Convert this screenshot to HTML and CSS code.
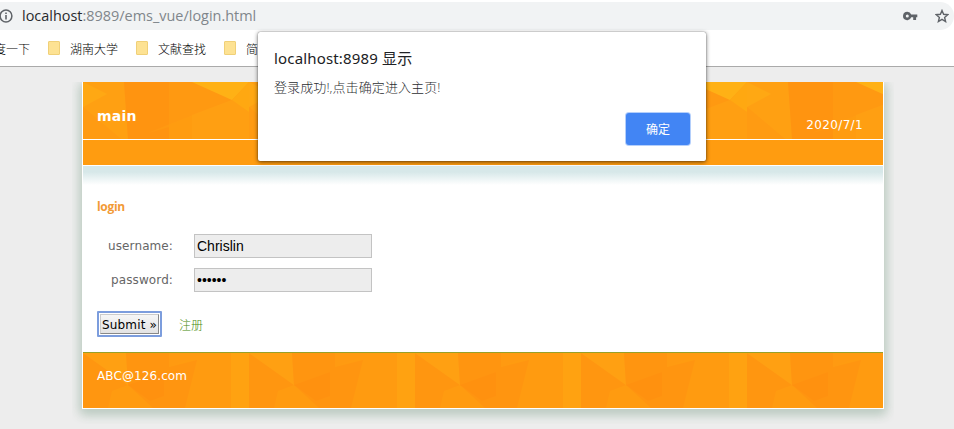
FILE: index.html
```html
<!DOCTYPE html>
<html lang="zh-CN">
<head>
<meta charset="utf-8">
<title>login</title>
<link rel="stylesheet" href="styles.css">
</head>
<body>
<div class="browser">
  <div class="address">
    <svg class="info" width="14" height="14" viewBox="0 0 14 14"><circle cx="7" cy="7" r="5.9" fill="none" stroke="#5f6368" stroke-width="1.5"/><path d="M6.2 6h1.6v4.4H6.2zM6.2 3.4h1.6v1.6H6.2z" fill="#5f6368"/></svg>
    <div class="url"><span class="host">localhost</span>:8989/ems_vue/login.html</div>
    <svg class="key" width="15" height="10" viewBox="0 0 15 10"><path fill-rule="evenodd" d="M4.3.7a4.2 4.2 0 0 1 3.9 2.8H14.3v2.8h-1.2v2.6h-2.9V6.3h-2A4.2 4.2 0 1 1 4.3.7zm0 2.7a1.5 1.5 0 1 0 0 3 1.5 1.5 0 0 0 0-3z" fill="#5f6368"/></svg>
    <svg class="star" width="14" height="14" viewBox="0 0 14 14"><path d="M7 1.5l1.6 3.8 4.2.4-3.2 2.7 1 4.1L7 10.3l-3.6 2.2 1-4.1L1.2 5.7l4.2-.4z" fill="none" stroke="#5f6368" stroke-width="1.4"/></svg>
  </div>
  <div class="bookmarks">
    <span class="mark first">度一下</span>
    <i class="folder"></i><span class="mark">湖南大学</span>
    <i class="folder"></i><span class="mark">文献查找</span>
    <i class="folder"></i><span class="mark">简</span>
  </div>
</div>
<div class="page">
  <div class="wrap">
    <div class="header">
      <svg class="art" width="800" height="57">
        <defs>
          <pattern id="top" width="166" height="57" patternUnits="userSpaceOnUse">
            <path d="M0 0h166v57H0z" fill="#ff9c10"/>
            <path d="M0 0h41l4 57h-7L0 25z" fill="#ffa012"/>
            <path d="M0 0v25l24-13z" fill="#ffa813"/>
            <path d="M0 25l38 32H0z" fill="#ff9b12"/>
            <path d="M41 0h45v57H45z" fill="#ff9410"/>
            <path d="M86 0h25l38 18-62 24-22 9 21-6z" fill="#ff9911"/>
            <path d="M149 18l17 12v27H109V33z" fill="#ff9f12"/>
            <path d="M109 0h57l-17 18z" fill="#ffb115"/>
            <path d="M166 0v30l-17-12z" fill="#ffa811"/>
          </pattern>
        </defs>
        <path d="M0 0h800v57H0z" fill="url(#top)"/>
      </svg>
      <div class="brand">main</div>
      <div class="date">2020/7/1</div>
    </div>
    <div class="nav"></div>
    <div class="content">
      <h1>login</h1>
      <div class="row"><label>username:</label><div class="input">Chrislin</div></div>
      <div class="row"><label>password:</label><div class="input dots">••••••</div></div>
      <div class="actions"><div class="submit"><span>Submit »</span></div><a>注册</a></div>
    </div>
    <div class="footer">
      <svg class="art" width="800" height="55">
        <defs>
          <pattern id="bottom" width="166" height="55" patternUnits="userSpaceOnUse">
            <path d="M0 0h166v55H0z" fill="#ff9b10"/>
            <path d="M0 0l45 32-16 6-4 17H0z" fill="#ff9610"/>
            <path d="M0 0h43l2 32z" fill="#ffa012"/>
            <path d="M43 0h43v14l28-7-12 48H70L45 32z" fill="#ff9510"/>
            <path d="M45 32l36-13v24l-14 5z" fill="#ff910f"/>
            <path d="M86 0h36l-36 14z" fill="#ff9a11"/>
            <path d="M148 0h18v55h-18z" fill="#ffa211"/>
          </pattern>
        </defs>
        <path d="M0 0h800v55H0z" fill="url(#bottom)"/>
      </svg>
      <div class="mail">ABC@126.com</div>
    </div>
  </div>
</div>
<div class="dialog">
  <div class="title">localhost:8989 显示</div>
  <div class="message">登录成功!,点击确定进入主页!</div>
  <div class="ok">确定</div>
</div>
</body>
</html>
```

FILE: styles.css
```css
* { box-sizing: border-box; }
body { margin: 0; width: 954px; height: 429px; overflow: hidden; background: #ededed; font: 12px "DejaVu Sans", "Noto Sans CJK SC", sans-serif; }
.browser { height: 67px; padding-top: 2px; background: #fff; border-bottom: 1px solid #aaa; }
.address { height: 28px; background: #f1f3f4; border-radius: 0 14px 14px 0; display: flex; align-items: center; }
.info { margin-left: -1px; }
.url { margin-left: 9px; font: 14.45px/28px "Open Sans", sans-serif; color: #80868b; white-space: nowrap; flex: 1; }
.host { color: #27292c; }
.key { margin-right: 17px; }
.star { margin-right: 5px; }
.bookmarks { height: 36px; display: flex; align-items: center; white-space: nowrap; font: 300 12px "Noto Sans CJK SC", sans-serif; color: #000; }
.mark.first { margin-left: -6px; }
.folder { width: 12px; height: 14px; margin: 0 10px 0 18px; background: #fde293; border: 1px solid #f0d078; border-radius: 1px; }
.page { padding: 15px 70px 0 82px; }
.wrap { width: 802px; border: solid #fff; border-width: 0 1px 1px; box-shadow: 0 3px 10px 2px #bccbc2, 0 5px 10px 0 #d0dad3; clip-path: inset(0 -10px -15px -10px); }
.header { height: 58px; border-bottom: 1px solid #fff; position: relative; display: flex; justify-content: space-between; color: #fff; }
.art { position: absolute; left: 0; top: 0; display: block; }
.brand { position: relative; padding: 25px 0 0 14px; font: bold 14px/18px "DejaVu Sans", sans-serif; letter-spacing: .2px; }
.date { position: relative; padding: 35px 20px 0 0; line-height: 16px; letter-spacing: .35px; }
.nav { height: 26px; background: #ff9c10; border-bottom: 1px solid #fff; }
.content { height: 186px; padding: 33px 14px 0; background: #fff linear-gradient(#d7e8e9 0, #d7e8e9 6px, #fff 19px) no-repeat; color: #666; }
h1 { margin: 0 0 19px; font: bold 12px/16px "Open Sans", sans-serif; letter-spacing: -.3px; color: #f29a36; }
.row { display: flex; align-items: center; height: 24px; margin-bottom: 10px; }
label { width: 76px; text-align: right; margin-right: 21px; letter-spacing: .1px; }
.input { width: 178px; height: 24px; padding-left: 2px; background: #ededed; border: 1px solid #c3c3c3; color: #000; font: 14px/22px "Liberation Sans", sans-serif; }
.actions { display: flex; align-items: center; margin-top: 19px; }
.submit { width: 65px; height: 26px; padding: 1px; border: 2px solid #7c9ddd; border-radius: 1px; background: #fff; }
.submit span { display: block; height: 20px; border: 1px solid #999; border-color: #ccc #888 #888 #ccc; background: linear-gradient(#f6f6f6, #e3e3e3); color: #000; line-height: 20px; text-align: center; white-space: nowrap; letter-spacing: .15px; }
.actions a { margin-left: 17px; color: #458a0c; font: 300 12px "Noto Sans CJK SC", sans-serif; }
.footer { position: relative; height: 56px; border-top: 1px solid #97a029; color: #fff; }
.mail { position: relative; padding: 15px 14px; line-height: 16px; letter-spacing: .1px; }
.dialog { position: absolute; left: 258px; top: 32px; width: 448px; height: 129px; padding: 16px; background: #fff; border-radius: 2px; box-shadow: 0 1px 4px rgba(0,0,0,.6), 0 0 1px rgba(0,0,0,.6); display: flex; flex-direction: column; }
.title { font: 400 15px/20px "Noto Sans", "Noto Sans CJK SC", sans-serif; color: #202124; letter-spacing: .16px; }
.message { margin-top: 9px; font: 300 13px/20px "Open Sans", "Noto Sans CJK SC", sans-serif; color: #2c2e31; letter-spacing: .1px; }
.ok { width: 64px; height: 32px; margin: 16px 0 0; align-self: flex-end; background: #4285f4; border-radius: 3px; box-shadow: 0 0 0 1px #b4cffb; color: #fff; font: 12px/32px "Noto Sans CJK SC", sans-serif; text-align: center; }
```
